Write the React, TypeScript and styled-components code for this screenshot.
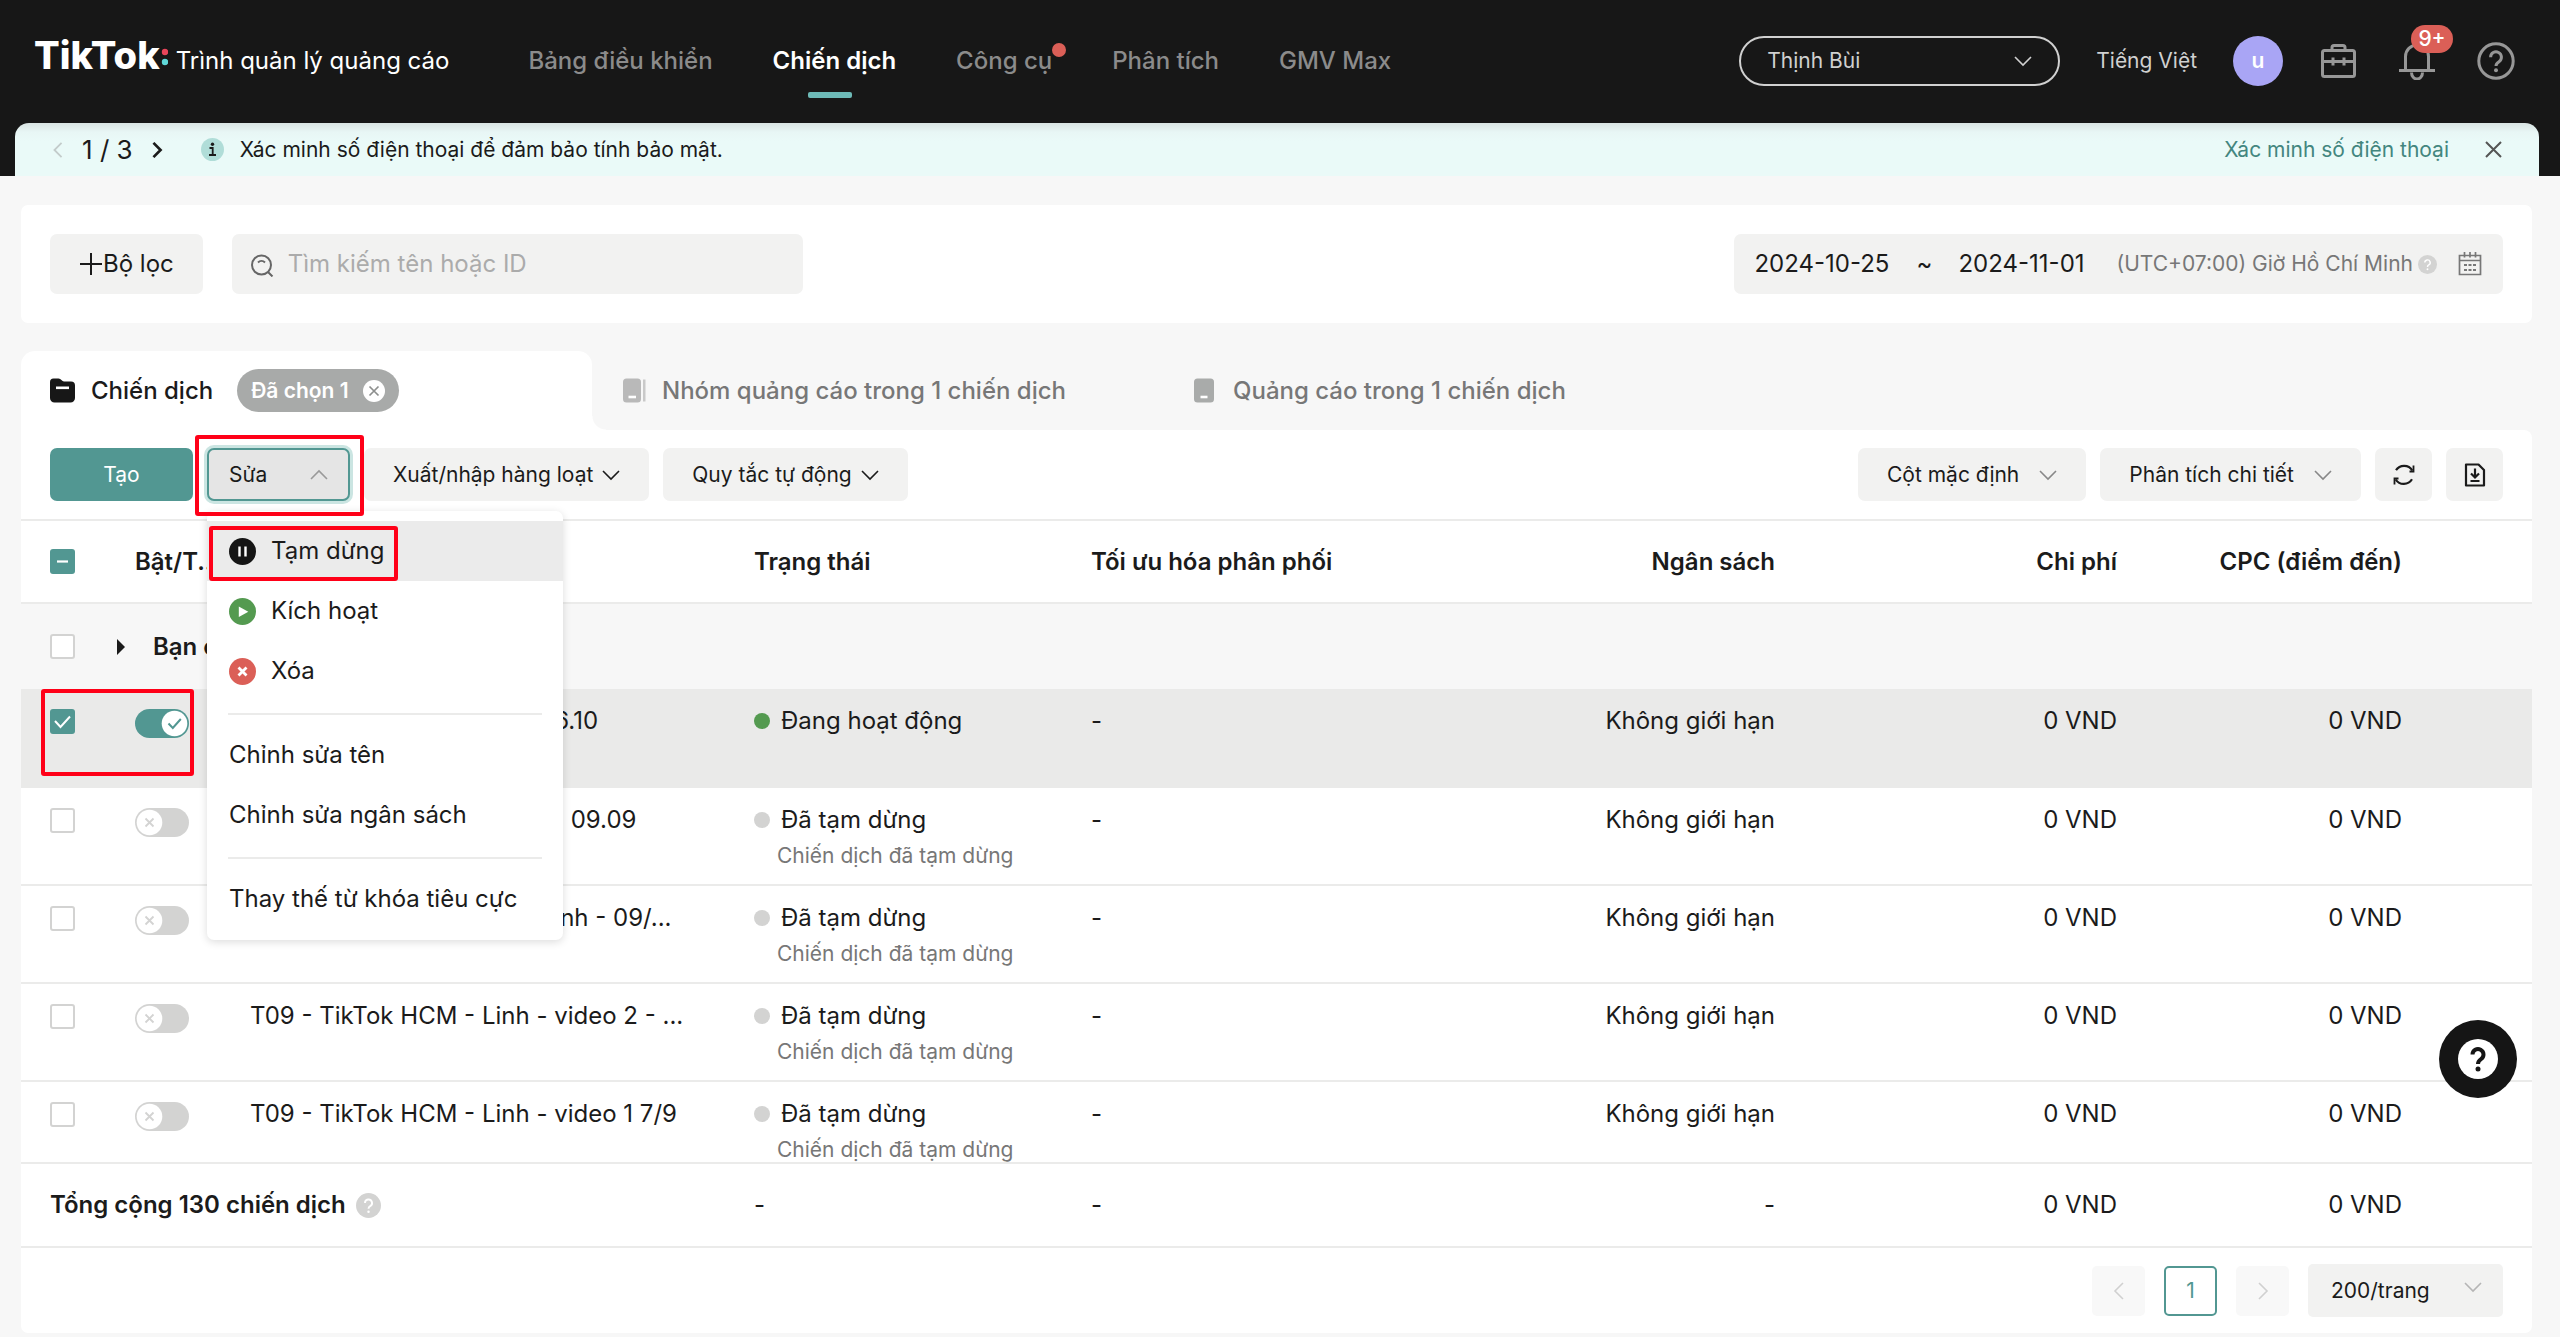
import React, { useId, useState } from "react";
import styled, { createGlobalStyle, css } from "styled-components";

const color = {
  ink: "#171717",
  text: "#1b1b1b",
  muted: "#777777",
  faint: "#ababab",
  teal: "#529792",
  link: "#43867f",
  field: "#f2f2f1",
  page: "#f7f7f7",
  line: "#ebebea",
  red: "#db5f57",
  green: "#549a50",
  mark: "#ff0018",
};

const Global = createGlobalStyle`
  *, *::before, *::after { box-sizing: border-box; }
  body {
    margin: 0;
    background: ${color.page};
    color: ${color.text};
    font: 400 24px/32px Inter, "Liberation Sans", sans-serif;
  }
  button, input, select { font: inherit; color: inherit; }
  svg { display: block; flex: none; }
`;

/* ---------- header ---------- */

const Header = styled.header`
  background: ${color.ink};
`;

const TopBar = styled.div`
  display: flex;
  align-items: center;
  height: 123px;
  padding: 0 45px 2px 34px;
`;

const Brand = styled.a`
  display: flex;
  align-items: baseline;
  margin-right: 79px;
  padding-bottom: 10px;
  color: #fff;
  text-decoration: none;
  white-space: nowrap;
`;

const Wordmark = styled.span`
  font-size: 38px;
  line-height: 40px;
  font-weight: 800;
`;

const BrandDots = styled.svg`
  margin-right: 8px;
`;

const Nav = styled.nav`
  display: flex;
  gap: 60px;
  flex: 1;
`;

const NavLink = styled.a<{ $active?: boolean }>`
  position: relative;
  color: ${(p) => (p.$active ? "#fff" : "#8b8b8b")};
  font-weight: ${(p) => (p.$active ? 600 : 500)};
  text-decoration: none;
  white-space: nowrap;
  ${(p) =>
    p.$active &&
    css`
      &::after {
        content: "";
        position: absolute;
        left: 50%;
        top: 47px;
        width: 44px;
        height: 6px;
        margin-left: -26px;
        border-radius: 2px;
        background: #6dbab7;
      }
    `}
`;

const NavDot = styled.i`
  position: absolute;
  left: 100%;
  top: -2px;
  width: 14px;
  height: 14px;
  border-radius: 50%;
  background: ${color.red};
`;

const Actions = styled.div`
  display: flex;
  align-items: center;
  gap: 36px;
  font-size: 21px;
  color: #d0d0d0;
`;

const Account = styled.button`
  display: flex;
  align-items: center;
  justify-content: space-between;
  width: 321px;
  height: 50px;
  padding: 0 26px;
  border: 2px solid #d0d0d0;
  border-radius: 25px;
  background: none;
`;

const PlainButton = styled.button`
  padding: 0;
  border: 0;
  background: none;
  white-space: nowrap;
`;

const Avatar = styled(PlainButton)`
  width: 50px;
  height: 50px;
  border-radius: 50%;
  background: #a9a5f5;
  color: #fff;
  font-weight: 600;
`;

const IconGroup = styled.div`
  display: flex;
  gap: 41px;
  color: #979797;
`;

const IconButton = styled(PlainButton)`
  position: relative;
`;

const Badge = styled.span`
  position: absolute;
  left: 13px;
  top: -17px;
  width: 42px;
  height: 28px;
  border-radius: 14px;
  background: ${color.red};
  color: #fff;
  font-weight: 500;
  line-height: 28px;
  text-align: center;
`;

const Banner = styled.section`
  display: flex;
  align-items: center;
  gap: 16px;
  height: 53px;
  margin: 0 21px 0 15px;
  padding: 0 37px 0 35px;
  border-radius: 14px 14px 0 0;
  background: linear-gradient(#d9e4e3, #e8f6f5 9px, #eafaf8 18px);
  font-size: 21px;
`;

const Pager = styled.div`
  display: flex;
  align-items: center;
  gap: 16px;
  margin-right: 20px;
  font-size: 26px;
`;

const BannerText = styled.p`
  flex: 1;
  margin: 0;
`;

const BannerLink = styled.a`
  margin-right: 20px;
  color: ${color.link};
  text-decoration: none;
`;

/* ---------- filter card ---------- */

const Main = styled.main`
  display: flex;
  flex-direction: column;
  gap: 28px;
  padding: 29px 28px 4px 21px;
`;

const FilterCard = styled.section`
  display: flex;
  gap: 29px;
  padding: 29px;
  border-radius: 7px;
  background: #fff;
`;

const FilterButton = styled.button`
  display: flex;
  align-items: center;
  height: 60px;
  padding: 0 29px;
  border: 0;
  border-radius: 7px;
  background: ${color.field};
  white-space: nowrap;
`;

const Search = styled.label`
  display: flex;
  align-items: center;
  gap: 14px;
  width: 571px;
  height: 60px;
  padding: 0 18px;
  border-radius: 7px;
  background: ${color.field};
`;

const BareInput = styled.input`
  min-width: 0;
  padding: 0;
  border: 0;
  outline: 0;
  background: none;
  &::placeholder {
    color: ${color.faint};
    opacity: 1;
  }
`;

const SearchInput = styled(BareInput)`
  flex: 1;
`;

const DateRange = styled.div`
  display: flex;
  align-items: center;
  height: 60px;
  margin-left: auto;
  padding: 0 21px 0 20px;
  border-radius: 7px;
  background: ${color.field};
`;

const DateInput = styled(BareInput)`
  width: 136px;
`;

const Tilde = styled.span`
  width: 68px;
  text-align: center;
`;

const Zone = styled.span`
  margin: 0 5px 0 22px;
  color: ${color.muted};
  font-size: 21px;
  white-space: nowrap;
`;

const CalendarButton = styled(PlainButton)`
  margin-left: 21px;
`;

/* ---------- tabs ---------- */

const Tabs = styled.div`
  display: flex;
`;

const Tab = styled.div<{ $active?: boolean }>`
  position: relative;
  display: flex;
  align-items: center;
  flex: 0 1 571px;
  height: 79px;
  padding-left: 29px;
  border-radius: 14px 14px 0 0;
  background: ${(p) => (p.$active ? "#fff" : "none")};
  color: ${(p) => (p.$active ? color.text : color.muted)};
  ${(p) =>
    p.$active &&
    css`
      &::after {
        content: "";
        position: absolute;
        left: 100%;
        bottom: 0;
        width: 14px;
        height: 14px;
        background: radial-gradient(circle at 100% 0, transparent 13px, #fff 14px);
      }
    `}
`;

const TabButton = styled(PlainButton)`
  display: flex;
  align-items: center;
  gap: 16px;
  font-weight: 500;
`;

const Chip = styled.span`
  display: flex;
  align-items: center;
  gap: 14px;
  height: 43px;
  margin-left: 24px;
  padding: 0 14px;
  border-radius: 22px;
  background: #a8aaa9;
  color: #fff;
  font-size: 21px;
  font-weight: 600;
`;

const Panel = styled.section`
  border-radius: 0 8px 7px 7px;
  background: #fff;
`;

/* ---------- toolbar ---------- */

const Toolbar = styled.div`
  display: flex;
  gap: 14px;
  padding: 18px 29px;
  border-bottom: 2px solid ${color.line};
`;

const ToolButton = styled.button<{ $chevronGap?: number }>`
  display: flex;
  align-items: center;
  gap: ${(p) => p.$chevronGap ?? 9}px;
  height: 53px;
  padding: 0 29px;
  border: 0;
  border-radius: 7px;
  background: ${color.field};
  font-size: 21px;
  white-space: nowrap;
`;

const CreateButton = styled(ToolButton)`
  justify-content: center;
  width: 143px;
  background: ${color.teal};
  color: #fff;
`;

const SquareButton = styled(ToolButton)`
  justify-content: center;
  width: 57px;
  padding: 0;
`;

const ToolbarEnd = styled.div`
  display: flex;
  gap: 14px;
  margin-left: auto;
`;

const EditWrap = styled.div`
  position: relative;
  z-index: 10;
`;

const EditButton = styled(ToolButton)`
  justify-content: space-between;
  width: 143px;
  padding: 0 20px;
  border: 2px solid ${color.teal};
  background: #e5e5e5;
  box-shadow: 0 0 0 3px #cbe5e2;
`;

const Mark = styled.span<{ $x: number; $y: number; $w: number; $h: number }>`
  position: absolute;
  z-index: 2;
  left: ${(p) => p.$x}px;
  top: ${(p) => p.$y}px;
  width: ${(p) => p.$w}px;
  height: ${(p) => p.$h}px;
  border: 4px solid ${color.mark};
  border-radius: 3px;
  pointer-events: none;
`;

const Menu = styled.div`
  position: absolute;
  left: 0;
  top: 63px;
  width: 356px;
  padding: 10px 0 11px;
  border-radius: 7px;
  background: #fff;
  box-shadow: 0 2px 8px rgba(0, 0, 0, 0.14);
`;

const MenuItem = styled.button<{ $hover?: boolean }>`
  position: relative;
  display: flex;
  align-items: center;
  gap: 15px;
  width: 100%;
  height: 60px;
  padding: 0 22px;
  border: 0;
  background: ${(p) => (p.$hover ? "#ebebeb" : "none")};
  white-space: nowrap;
`;

const MenuRule = styled.hr`
  height: 2px;
  margin: 12px 21px 10px;
  border: 0;
  background: ${color.line};
`;

/* ---------- table ---------- */

const Table = styled.table`
  width: 100%;
  table-layout: fixed;
  border-collapse: separate;
  border-spacing: 0;
`;

const Col = styled.col<{ $w?: number }>`
  width: ${(p) => (p.$w ? `${p.$w}px` : "auto")};
`;

const Th = styled.th<{ $end?: boolean }>`
  height: 83px;
  padding: 0 29px;
  border-bottom: 2px solid ${color.line};
  font-weight: 600;
  text-align: ${(p) => (p.$end ? "right" : "left")};
  white-space: nowrap;
`;

const Row = styled.tr<{ $selected?: boolean }>`
  background: ${(p) => (p.$selected ? "#eaeae9" : "#fff")};
`;

const Td = styled.td<{ $end?: boolean; $h: number; $flat?: boolean }>`
  position: relative;
  height: ${(p) => p.$h}px;
  padding: 16px 29px 0;
  border-bottom: ${(p) => (p.$flat ? "0" : `2px solid ${color.line}`)};
  text-align: ${(p) => (p.$end ? "right" : "left")};
  vertical-align: top;
  white-space: nowrap;
`;

const GroupTd = styled.td`
  height: 85px;
  padding: 0 29px;
  background: ${color.page};
  font-weight: 600;
`;

const GroupLine = styled.div`
  display: flex;
  align-items: center;
`;

const Expander = styled(PlainButton)`
  margin: 0 28px 0 42px;
`;

const FootTd = styled.td<{ $end?: boolean }>`
  height: 84px;
  padding: 0 29px;
  border-bottom: 2px solid ${color.line};
  text-align: ${(p) => (p.$end ? "right" : "left")};
`;

const FootTh = styled.th`
  padding: 0 29px;
  border-bottom: 2px solid ${color.line};
  font-weight: 600;
  text-align: left;
`;

const FootLine = styled.div`
  display: flex;
  align-items: center;
  gap: 10px;
`;

const Control = styled.label<{ $line?: number }>`
  display: flex;
  align-items: center;
  height: ${(p) => p.$line ?? 32}px;
`;

const HiddenInput = styled.input`
  position: absolute;
  width: 1px;
  height: 1px;
  margin: 0;
  opacity: 0;
`;

const Status = styled.div`
  display: flex;
  align-items: center;
  gap: 11px;
`;

const Dot = styled.i<{ $on?: boolean }>`
  width: 16px;
  height: 16px;
  border-radius: 50%;
  background: ${(p) => (p.$on ? color.green : "#d3d3d2")};
`;

const SubText = styled.div`
  padding: 7px 0 0 23px;
  color: ${color.muted};
  font-size: 21px;
  line-height: 25px;
`;

/* ---------- pagination ---------- */

const Pagination = styled.nav`
  display: flex;
  align-items: center;
  justify-content: flex-end;
  gap: 19px;
  height: 85px;
  padding: 0 29px;
  font-size: 21px;
`;

const PageButton = styled.button<{ $current?: boolean }>`
  display: flex;
  align-items: center;
  justify-content: center;
  width: 53px;
  height: 50px;
  padding: 0;
  border: ${(p) => (p.$current ? `2px solid ${color.teal}` : "0")};
  border-radius: 5px;
  background: ${(p) => (p.$current ? "#fff" : "#f8f8f8")};
  color: ${(p) => (p.$current ? color.teal : "#d0d0d0")};
`;

const SizeSelect = styled.span`
  position: relative;
  svg {
    position: absolute;
    right: 21px;
    top: 14px;
    pointer-events: none;
  }
`;

const Select = styled.select`
  display: block;
  width: 195px;
  height: 53px;
  padding: 0 23px;
  border: 0;
  border-radius: 5px;
  background: ${color.field};
  appearance: none;
`;

const HelpFab = styled.button`
  position: fixed;
  z-index: 20;
  right: 43px;
  bottom: 239px;
  display: flex;
  align-items: center;
  justify-content: center;
  width: 78px;
  height: 78px;
  padding: 0;
  border: 0;
  border-radius: 50%;
  background: #151515;
`;

/* ---------- icons ---------- */

type ChevronProps = { dir?: "down" | "up" | "left" | "right"; size?: number; stroke?: string; width?: number };
const chevrons = {
  down: "M1 5l8 8 8-8",
  up: "M1 13l8-8 8 8",
  left: "M13 1L5 9l8 8",
  right: "M5 1l8 8-8 8",
};
const Chevron = ({ dir = "down", size = 18, stroke = color.text, width = 1.6 }: ChevronProps) => (
  <svg width={size} height={size} viewBox="0 0 18 18" fill="none" stroke={stroke} strokeWidth={width}>
    <path d={chevrons[dir]} />
  </svg>
);

const Cross = ({ size = 17, stroke = "#555", width = 2 }) => (
  <svg width={size} height={size} viewBox="0 0 17 17" fill="none" stroke={stroke} strokeWidth={width}>
    <path d="M1 1l15 15M16 1L1 16" />
  </svg>
);

const questionHook = "M8.6 9.6a3.4 3.4 0 1 1 5 3c-1.1.6-1.6 1.2-1.6 2.4";

const Question = ({ size = 25 }: { size?: number }) => (
  <svg width={size} height={size} viewBox="0 0 24 24" fill="none">
    <circle cx="12" cy="12" r="12" fill="#d3d3d2" />
    <path d={questionHook} stroke="#fff" strokeWidth="1.8" />
    <circle cx="12" cy="18" r="1.2" fill="#fff" />
  </svg>
);

const HelpOutline = () => (
  <svg width="38" height="38" viewBox="0 0 38 38" fill="none" stroke="currentColor" strokeWidth="3">
    <circle cx="19" cy="19" r="17.2" />
    <path d="M13.6 15.2a5.4 5.4 0 1 1 8.4 4.5c-2 1.3-3 2.200-3 4.300" />
    <circle cx="19" cy="28.300" r="2" fill="currentColor" stroke="none" />
  </svg>
);

const Briefcase = () => (
  <svg width="38" height="38" viewBox="0 0 38 38" fill="none" stroke="currentColor" strokeWidth="3">
    <rect x="3.500" y="8.500" width="32" height="26" rx="2" />
    <path d="M13 8V5.500a2 2 0 0 1 2-2h9a2 2 0 0 1 2 2V8M3.500 19.500h32M14 15.500v8M25 15.500v8" />
  </svg>
);

const Bell = () => (
  <svg width="38" height="38" viewBox="0 0 38 38" fill="none" stroke="currentColor" strokeWidth="3">
    <path d="M7.500 27V14.500a11.500 11.500 0 0 1 23 0V27M1 28.500h36" />
    <path d="M13.500 30.500a5.500 6.500 0 0 0 11 0" />
  </svg>
);

const Info = () => (
  <svg width="23" height="23" viewBox="0 0 23 23" fill="none">
    <circle cx="11.500" cy="11.500" r="11.500" fill="#b0ddd8" />
    <circle cx="11.500" cy="6.200" r="1.700" fill="#1b1b1b" />
    <path d="M8.500 10h3.200v7M8 17h7" stroke="#1b1b1b" strokeWidth="1.800" />
  </svg>
);

const Plus = () => (
  <svg width="24" height="24" viewBox="0 0 24 24" stroke={color.text} strokeWidth="2">
    <path d="M1 12h22M12 1v22" />
  </svg>
);

const Magnifier = () => (
  <svg width="24" height="26" viewBox="0 0 24 26" fill="none" stroke="#666" strokeWidth="2">
    <circle cx="11.500" cy="14" r="9.500" />
    <path d="M18 21l4.500 4.500M8 11.500a5 5 0 0 1 7 0" />
  </svg>
);

const Calendar = () => (
  <svg width="24" height="24" viewBox="0 0 24 24" fill="none" stroke="#777" strokeWidth="1.700">
    <path d="M1.500 3.500h21v19h-21zM1.500 8.500h21M6.500 0v5.500M12 0v5.500M17.500 0v5.500" />
    <path d="M6 13h12M6 18h12" strokeWidth="2" strokeDasharray="3 1.500" />
  </svg>
);

const Folder = () => (
  <svg width="25" height="25" viewBox="0 0 25 25">
    <path d="M0 4a3.500 3.500 0 0 1 3.500-3.500h5c2.500 0 3.500 3 5.500 3h7A4 4 0 0 1 25 7.500V20a4.500 4.500 0 0 1-4.500 4.500h-16A4.500 4.500 0 0 1 0 20z" fill={color.ink} />
    <path d="M6 9.800h13" stroke="#fff" strokeWidth="2.600" />
  </svg>
);

const GroupDevice = () => (
  <svg width="25" height="25" viewBox="0 0 25 25">
    <rect x="2" y="0.500" width="18" height="24" rx="3.500" fill="#b9b9b9" />
    <path d="M22 1.500h2.500v22H22z" fill="#c9c9c9" />
    <path d="M7.500 19h7.500" stroke="#fff" strokeWidth="2.600" />
  </svg>
);

const Device = () => (
  <svg width="25" height="25" viewBox="0 0 25 25">
    <rect x="2" y="0.500" width="20" height="24" rx="3.500" fill="#a9abaa" />
    <path d="M8.500 19h7" stroke="#fff" strokeWidth="2.600" />
  </svg>
);

const ChipClose = () => (
  <svg width="22" height="22" viewBox="0 0 22 22">
    <circle cx="11" cy="11" r="11" fill="#fff" />
    <path d="M6.500 6.500l9 9M15.500 6.500l-9 9" stroke="#8d8f8e" strokeWidth="1.700" />
  </svg>
);

const Refresh = () => (
  <svg width="24" height="24" viewBox="0 0 24 24" fill="none" stroke={color.text} strokeWidth="2.200">
    <path d="M4 7.200A9.600 9.600 0 0 1 20.300 7.500M20 16.300A9.600 9.600 0 0 1 3.700 16.500" />
    <path d="M17.500 8.500h4V2.500M6.500 15.500h-4v6" strokeWidth="1.800" />
  </svg>
);

const FileDown = () => (
  <svg width="24" height="26" viewBox="0 0 24 26" fill="none" stroke={color.text} strokeWidth="2.200">
    <path d="M3 2.500h12.500L21 8v15.500H3z" strokeLinejoin="round" />
    <path d="M12 6.500v8M8 11.500l4 4 4-4M7.500 19h9" />
  </svg>
);

const PauseDisc = () => (
  <svg width="27" height="27" viewBox="0 0 27 27">
    <circle cx="13.500" cy="13.500" r="13.500" fill="#151515" />
    <path d="M10.500 8.500v10M16.500 8.500v10" stroke="#fff" strokeWidth="2.400" />
  </svg>
);

const PlayDisc = () => (
  <svg width="27" height="27" viewBox="0 0 27 27">
    <circle cx="13.500" cy="13.500" r="13.500" fill={color.green} />
    <path d="M9.800 8.500v10.500l9.500-5.200z" fill="#fff" />
  </svg>
);

const DeleteDisc = () => (
  <svg width="27" height="27" viewBox="0 0 27 27">
    <circle cx="13.500" cy="13.500" r="13.500" fill={color.red} />
    <path d="M9.500 9.500l8 8M17.500 9.500l-8 8" stroke="#fff" strokeWidth="2.800" />
  </svg>
);

/* ---------- controls ---------- */

type BoxState = "on" | "off" | "mixed";
const CheckBox = ({ state, label }: { state: BoxState; label: string }) => {
  const [checked, setChecked] = useState(state === "on");
  const filled = checked || state === "mixed";
  return (
    <Control>
      <HiddenInput type="checkbox" aria-label={label} checked={checked} onChange={(e) => setChecked(e.target.checked)} />
      <svg width="25" height="25" viewBox="0 0 25 25" fill="none">
        {filled ? (
          <rect width="25" height="25" rx="3" fill={color.teal} />
        ) : (
          <rect x="1" y="1" width="23" height="23" rx="2" fill="#fff" stroke="#d3d3d2" strokeWidth="2" />
        )}
        {state === "mixed" && <path d="M7 12.500h11" stroke="#fff" strokeWidth="2.200" />}
        {state !== "mixed" && checked && <path d="M5 12l5.500 6L20 7.500" stroke="#fff" strokeWidth="2" />}
      </svg>
    </Control>
  );
};

const Toggle = ({ initial, label }: { initial: boolean; label: string }) => {
  const [on, setOn] = useState(initial);
  return (
    <Control $line={36}>
      <HiddenInput type="checkbox" role="switch" aria-label={label} checked={on} onChange={(e) => setOn(e.target.checked)} />
      <svg width="54" height="29" viewBox="0 0 54 29" fill="none">
        <rect width="54" height="29" rx="14.500" fill={on ? color.teal : "#d3d3d2"} />
        <circle cx={on ? 39.500 : 14.500} cy="14.500" r="12.800" fill="#fff" />
        {on ? (
          <path d="M33.500 14.500l4.300 4.500 8-9" stroke={color.teal} strokeWidth="2" />
        ) : (
          <path d="M10.500 10.500l8 8M18.500 10.500l-8 8" stroke="#d3d3d2" strokeWidth="1.800" />
        )}
      </svg>
    </Control>
  );
};

/* ---------- data ---------- */

const navItems = [
  { label: "Bảng điều khiển" },
  { label: "Chiến dịch", active: true },
  { label: "Công cụ", dot: true },
  { label: "Phân tích" },
  { label: "GMV Max" },
];

const campaigns = [
  { name: "T11 - TikTok HCM - Linh - 16.10", on: true, height: 99 },
  { name: "T09 - TikTok HCM - Linh - 1 09.09", on: false, height: 98 },
  { name: "T09 - TikTok HCM - Ms - Linh - 09/...", on: false, height: 98 },
  { name: "T09 - TikTok HCM - Linh - video 2 - ...", on: false, height: 98 },
  { name: "T09 - TikTok HCM - Linh - video 1 7/9", on: false, height: 82 },
];

export default function App() {
  const searchId = useId();
  return (
    <>
      <Global />
      <Header>
        <TopBar>
          <Brand href="#">
            <Wordmark>TikTok</Wordmark>
            <BrandDots width="8" height="26" viewBox="0 0 8 26">
              <circle cx="5" cy="9" r="3.200" fill="#e8455a" />
              <circle cx="5" cy="19" r="3.200" fill="#5fd8d8" />
            </BrandDots>
            <span>Trình quản lý quảng cáo</span>
          </Brand>
          <Nav>
            {navItems.map((n) => (
              <NavLink key={n.label} href="#" $active={n.active}>
                {n.label}
                {n.dot && <NavDot />}
              </NavLink>
            ))}
          </Nav>
          <Actions>
            <Account>
              Thịnh Bùi
              <Chevron stroke="#d0d0d0" />
            </Account>
            <PlainButton>Tiếng Việt</PlainButton>
            <Avatar>u</Avatar>
            <IconGroup>
              <IconButton aria-label="Trung tâm kinh doanh">
                <Briefcase />
              </IconButton>
              <IconButton aria-label="Thông báo">
                <Bell />
                <Badge>9+</Badge>
              </IconButton>
              <IconButton aria-label="Trợ giúp">
                <HelpOutline />
              </IconButton>
            </IconGroup>
          </Actions>
        </TopBar>
        <Banner>
          <Pager>
            <PlainButton aria-label="Trước">
              <Chevron dir="left" size={16} stroke="#c3cccb" width={2} />
            </PlainButton>
            <span>1 / 3</span>
            <PlainButton aria-label="Sau">
              <Chevron dir="right" size={16} width={3} />
            </PlainButton>
          </Pager>
          <Info />
          <BannerText>Xác minh số điện thoại để đảm bảo tính bảo mật.</BannerText>
          <BannerLink href="#">Xác minh số điện thoại</BannerLink>
          <PlainButton aria-label="Đóng">
            <Cross />
          </PlainButton>
        </Banner>
      </Header>

      <Main>
        <FilterCard>
          <FilterButton>
            <Plus />
            Bộ lọc
          </FilterButton>
          <Search htmlFor={searchId}>
            <Magnifier />
            <SearchInput id={searchId} type="text" placeholder="Tìm kiếm tên hoặc ID" />
          </Search>
          <DateRange>
            <DateInput type="text" aria-label="Ngày bắt đầu" defaultValue="2024-10-25" />
            <Tilde>~</Tilde>
            <DateInput type="text" aria-label="Ngày kết thúc" defaultValue="2024-11-01" />
            <Zone>(UTC+07:00) Giờ Hồ Chí Minh</Zone>
            <Question size={19} />
            <CalendarButton aria-label="Chọn ngày">
              <Calendar />
            </CalendarButton>
          </DateRange>
        </FilterCard>

        <div>
          <Tabs>
            <Tab $active>
              <TabButton>
                <Folder />
                Chiến dịch
              </TabButton>
              <Chip>
                Đã chọn 1
                <PlainButton aria-label="Bỏ chọn">
                  <ChipClose />
                </PlainButton>
              </Chip>
            </Tab>
            <Tab>
              <TabButton>
                <GroupDevice />
                Nhóm quảng cáo trong 1 chiến dịch
              </TabButton>
            </Tab>
            <Tab>
              <TabButton>
                <Device />
                Quảng cáo trong 1 chiến dịch
              </TabButton>
            </Tab>
          </Tabs>

          <Panel>
            <Toolbar>
              <CreateButton>Tạo</CreateButton>
              <EditWrap>
                <EditButton aria-expanded="true">
                  Sửa
                  <Chevron dir="up" stroke="#999" />
                </EditButton>
                <Mark $x={-12} $y={-13} $w={169} $h={81} />
                <Menu>
                  <MenuItem $hover>
                    <PauseDisc />
                    Tạm dừng
                    <Mark $x={2} $y={5} $w={189} $h={55} />
                  </MenuItem>
                  <MenuItem>
                    <PlayDisc />
                    Kích hoạt
                  </MenuItem>
                  <MenuItem>
                    <DeleteDisc />
                    Xóa
                  </MenuItem>
                  <MenuRule />
                  <MenuItem>Chỉnh sửa tên</MenuItem>
                  <MenuItem>Chỉnh sửa ngân sách</MenuItem>
                  <MenuRule />
                  <MenuItem>Thay thế từ khóa tiêu cực</MenuItem>
                </Menu>
              </EditWrap>
              <ToolButton>
                Xuất/nhập hàng loạt
                <Chevron />
              </ToolButton>
              <ToolButton>
                Quy tắc tự động
                <Chevron />
              </ToolButton>
              <ToolbarEnd>
                <ToolButton $chevronGap={20}>
                  Cột mặc định
                  <Chevron stroke="#888" />
                </ToolButton>
                <ToolButton $chevronGap={20}>
                  Phân tích chi tiết
                  <Chevron stroke="#888" />
                </ToolButton>
                <SquareButton aria-label="Làm mới">
                  <Refresh />
                </SquareButton>
                <SquareButton aria-label="Tải xuống">
                  <FileDown />
                </SquareButton>
              </ToolbarEnd>
            </Toolbar>

            <Table>
              <colgroup>
                <Col $w={85} />
                <Col $w={115} />
                <Col $w={504} />
                <Col $w={337} />
                <Col />
                <Col />
                <Col $w={342} />
                <Col $w={285} />
                <Col $w={101} />
              </colgroup>
              <thead>
                <tr>
                  <Th>
                    <CheckBox state="mixed" label="Chọn tất cả" />
                  </Th>
                  <Th>Bật/T...</Th>
                  <Th aria-label="Tên" />
                  <Th>Trạng thái</Th>
                  <Th>Tối ưu hóa phân phối</Th>
                  <Th $end>Ngân sách</Th>
                  <Th $end>Chi phí</Th>
                  <Th $end>CPC (điểm đến)</Th>
                  <Th />
                </tr>
              </thead>
              <tbody>
                <tr>
                  <GroupTd colSpan={9}>
                    <GroupLine>
                      <CheckBox state="off" label="Chọn nhóm" />
                      <Expander aria-label="Mở rộng">
                        <svg width="8" height="16" viewBox="0 0 8 16">
                          <path d="M0 0l8 8-8 8z" fill={color.text} />
                        </svg>
                      </Expander>
                      Bạn có 1 chiến dịch
                    </GroupLine>
                  </GroupTd>
                </tr>
                {campaigns.map((c) => {
                  const cell = { $h: c.height, $flat: c.on };
                  return (
                    <Row key={c.name} $selected={c.on}>
                      <Td {...cell}>
                        <CheckBox state={c.on ? "on" : "off"} label={`Chọn ${c.name}`} />
                        {c.on && <Mark $x={20} $y={0} $w={153} $h={87} />}
                      </Td>
                      <Td {...cell}>
                        <Toggle initial={c.on} label={`Bật ${c.name}`} />
                      </Td>
                      <Td {...cell}>{c.name}</Td>
                      <Td {...cell}>
                        <Status>
                          <Dot $on={c.on} />
                          {c.on ? "Đang hoạt động" : "Đã tạm dừng"}
                        </Status>
                        {!c.on && <SubText>Chiến dịch đã tạm dừng</SubText>}
                      </Td>
                      <Td {...cell}>-</Td>
                      <Td {...cell} $end>
                        Không giới hạn
                      </Td>
                      <Td {...cell} $end>
                        0 VND
                      </Td>
                      <Td {...cell} $end>
                        0 VND
                      </Td>
                      <Td {...cell} />
                    </Row>
                  );
                })}
              </tbody>
              <tfoot>
                <tr>
                  <FootTh colSpan={3} scope="row">
                    <FootLine>
                      Tổng cộng 130 chiến dịch
                      <Question />
                    </FootLine>
                  </FootTh>
                  <FootTd>-</FootTd>
                  <FootTd>-</FootTd>
                  <FootTd $end>-</FootTd>
                  <FootTd $end>0 VND</FootTd>
                  <FootTd $end>0 VND</FootTd>
                  <FootTd />
                </tr>
              </tfoot>
            </Table>

            <Pagination aria-label="Phân trang">
              <PageButton aria-label="Trang trước">
                <Chevron dir="left" stroke="currentColor" />
              </PageButton>
              <PageButton $current>1</PageButton>
              <PageButton aria-label="Trang sau">
                <Chevron dir="right" stroke="currentColor" />
              </PageButton>
              <SizeSelect>
                <Select aria-label="Số dòng mỗi trang" defaultValue="200">
                  <option value="200">200/trang</option>
                </Select>
                <Chevron stroke="#b5b5b5" />
              </SizeSelect>
            </Pagination>
          </Panel>
        </div>
      </Main>

      <HelpFab aria-label="Hỗ trợ">
        <svg width="40" height="40" viewBox="0 0 40 40" fill="none">
          <circle cx="20" cy="20" r="20" fill="#fff" />
          <path d="M14.500 15.500a5.500 5.500 0 1 1 8.500 4.600c-2.200 1.500-3 2.400-3 4.900" stroke="#151515" strokeWidth="4" />
          <circle cx="20" cy="30" r="2.500" fill="#151515" />
        </svg>
      </HelpFab>
    </>
  );
}
